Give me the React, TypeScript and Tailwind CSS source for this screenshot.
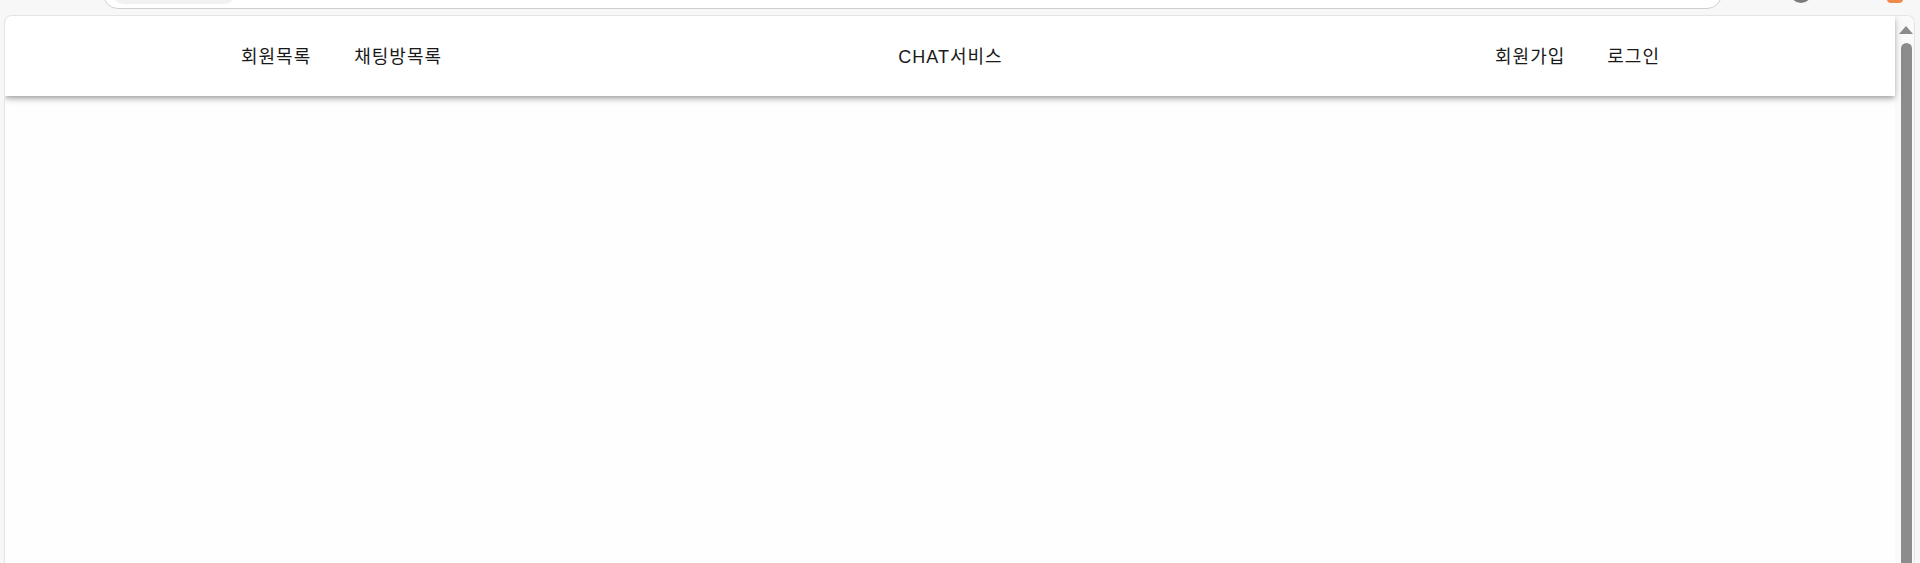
export default function App() {
  const font = { fontFamily: '"Liberation Sans", "Noto Sans CJK KR", sans-serif' };

  return (
    <div className="h-[563px] w-full overflow-hidden bg-[#f7f7f7] flex flex-col" style={font}>
      {/* browser top strip */}
      <div className="h-[15px] flex items-start shrink-0">
        <div className="ml-[103px] w-[1619px] h-[30px] -mt-[21px] rounded-full border border-[#cfcfcf] bg-white flex items-end pb-[4px] pl-[6px]">
          <div className="w-[128px] h-[30px] rounded-full bg-[#f1f1f1]" />
        </div>
        <div className="ml-[68px] w-[22px] h-[22px] -mt-[19px] rounded-full bg-[#7a7a7a]" />
        <div className="ml-[75px] w-[16px] h-[16px] -mt-[13px] rounded-[4px] bg-[#f08a4b]" />
      </div>

      {/* page viewport */}
      <div className="flex-1 flex ml-[4px] mr-[5px] rounded-t-[8px] border border-b-0 border-[#e4e4e4] bg-white overflow-hidden">
        <div className="flex-1 flex flex-col">
          <header className="h-[80px] bg-white shadow-[0_2px_4px_-1px_rgba(0,0,0,0.2),0_4px_5px_0_rgba(0,0,0,0.14),0_1px_10px_0_rgba(0,0,0,0.12)] relative z-10">
            <nav className="h-full grid grid-cols-[1fr_auto_1fr] items-center pl-[236px] pr-[235px] pt-[2px] text-[18px] tracking-[1px] text-[#1a1a1a]">
              <div className="flex items-center gap-[43px]">
                <a className="cursor-pointer">회원목록</a>
                <a className="cursor-pointer">채팅방목록</a>
              </div>
              <a className="cursor-pointer">CHAT서비스</a>
              <div className="flex items-center justify-end gap-[42px]">
                <a className="cursor-pointer">회원가입</a>
                <a className="cursor-pointer">로그인</a>
              </div>
            </nav>
          </header>
          <main className="flex-1 bg-[#fefefe]" />
        </div>

        {/* scrollbar */}
        <div className="w-[19px] bg-[#fafafa] flex flex-col items-center pt-[10px]">
          <div className="ml-[3px] w-0 h-0 border-l-[7px] border-r-[7px] border-b-[8px] border-l-transparent border-r-transparent border-b-[#8c8c8c]" />
          <div className="ml-[3px] mt-[9px] w-[11px] flex-1 rounded-t-full bg-[#8c8c8c]" />
        </div>
      </div>
    </div>
  );
}
